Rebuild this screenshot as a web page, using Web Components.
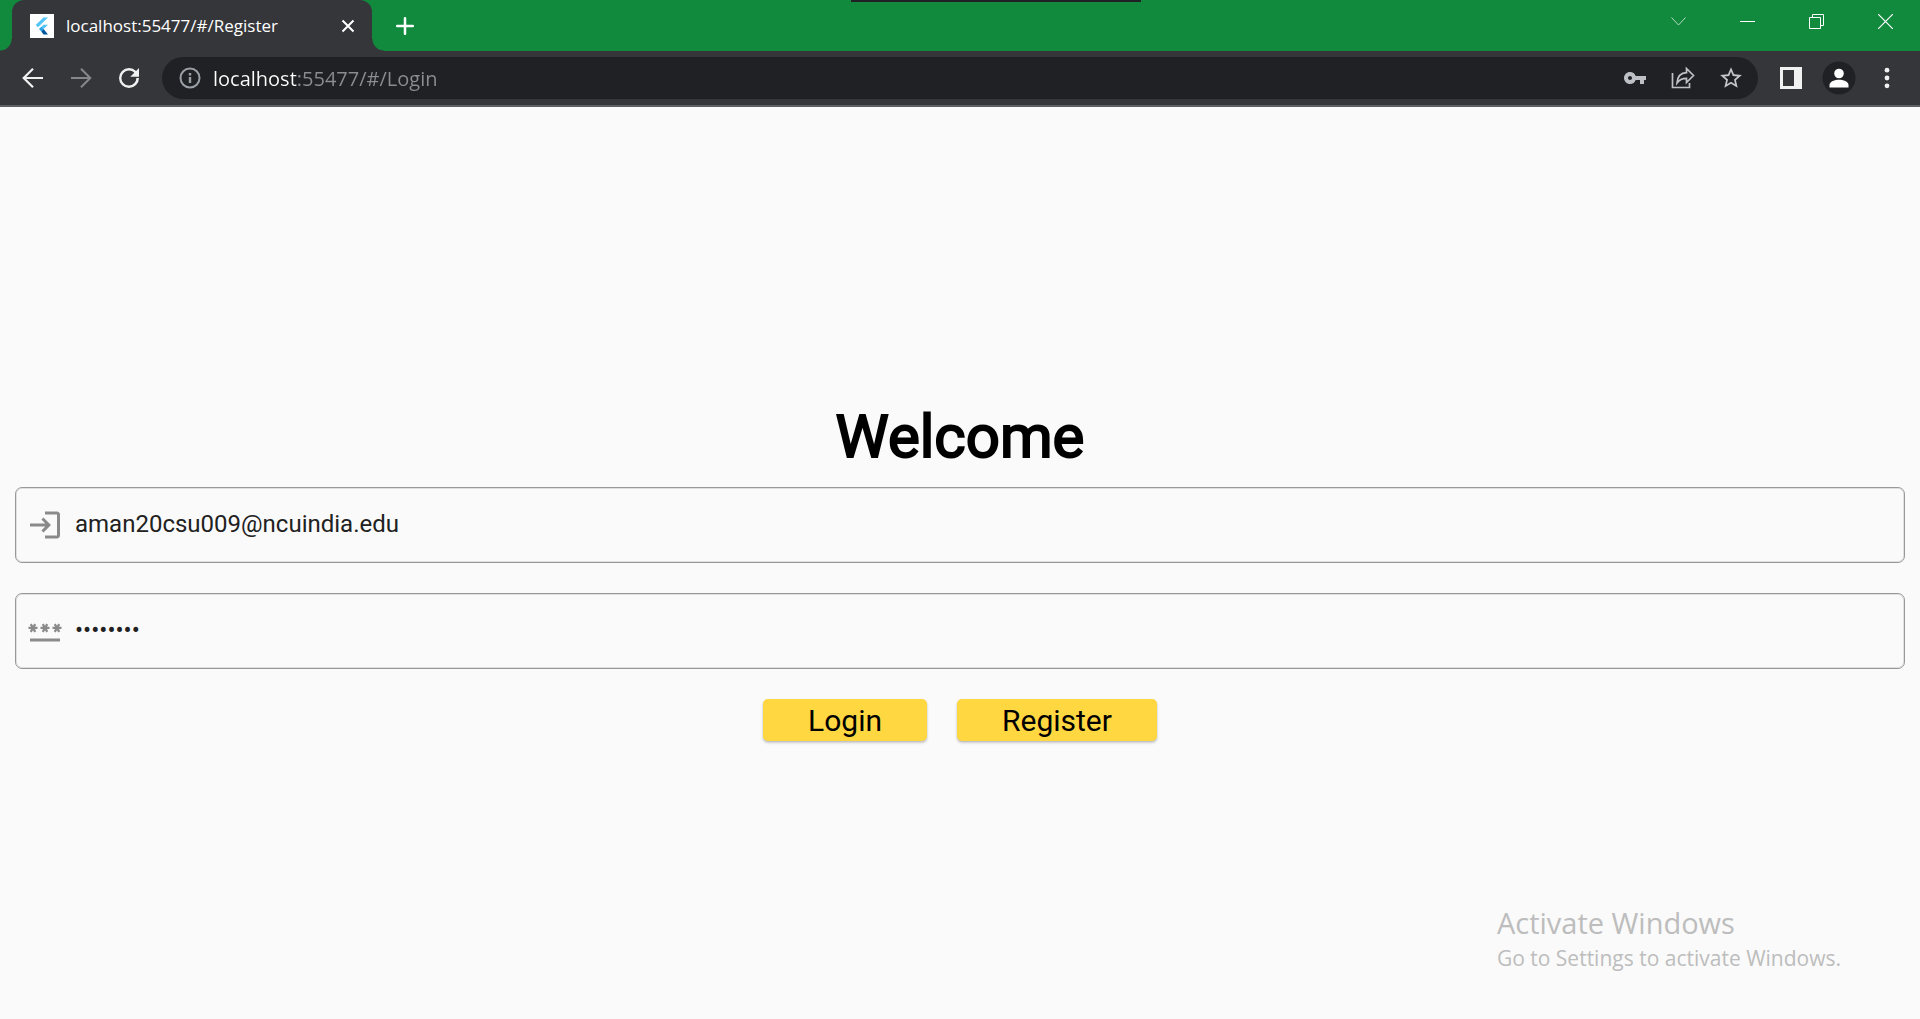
<!DOCTYPE html>
<html lang="en">
<head>
<meta charset="utf-8">
<title>localhost:55477/#/Register</title>
<style>
  html, body { margin: 0; height: 100%; }
  body { background: #fafafa; font-family: Roboto, "Liberation Sans", sans-serif; overflow: hidden; }
</style>
</head>
<body>
<app-window>
  <tab-strip slot="chrome" label="localhost:55477/#/Register"></tab-strip>
  <tool-bar slot="chrome" url="localhost:55477/#/Login"></tool-bar>
  <login-page>
    <text-field kind="text" label="Email" name="email" value="aman20csu009@ncuindia.edu"></text-field>
    <text-field kind="password" label="Password" name="password" value="12345678"></text-field>
    <raised-button slot="actions">Login</raised-button>
    <raised-button slot="actions">Register</raised-button>
  </login-page>
  <activation-note slot="overlay"></activation-note>
</app-window>

<script>
const define = (name, html, setup) => {
  const template = document.createElement('template');
  template.innerHTML = html;
  customElements.define(name, class extends HTMLElement {
    constructor() {
      super();
      this.attachShadow({ mode: 'open' }).append(template.content.cloneNode(true));
    }
    connectedCallback() { if (setup) setup(this, this.shadowRoot); }
  });
};

define('app-window', `
  <style>
    :host { display: flex; flex-direction: column; height: 100vh; position: relative; }
    main { flex: 1; display: flex; }
    .edge { position: absolute; top: 0; left: calc(50% - 109px); width: 290px; height: 2px; background: #202124; }
  </style>
  <slot name="chrome"></slot>
  <main><slot></slot></main>
  <div class="edge"></div>
  <slot name="overlay"></slot>
`);

define('tab-strip', `
  <style>
    :host { display: flex; height: 51px; background: #118a3e; padding-left: 12px;
      font-family: "Open Sans", "Noto Sans", sans-serif; }
    button { all: unset; display: flex; align-items: center; justify-content: center; }
    svg { display: block; }
    .tab { width: 360px; box-sizing: border-box; position: relative; display: flex; align-items: center;
      padding: 0 12px 0 18px; background: #35363a; border-radius: 12px 12px 0 0; color: #fff; }
    .tab::before, .tab::after { content: ""; position: absolute; bottom: 0; width: 12px; height: 12px; }
    .tab::before { right: 100%; background: radial-gradient(circle at 0 0, transparent 11px, #35363a 12px); }
    .tab::after { left: 100%; background: radial-gradient(circle at 100% 0, transparent 11px, #35363a 12px); }
    .title { flex: 1; margin-left: 12px; font-size: 17px; line-height: 24px; white-space: nowrap; }
    .close { width: 24px; height: 24px; }
    .new { width: 42px; margin-left: 12px; }
    .controls { margin-left: auto; display: flex; height: 43px; }
    .controls button { width: 69px; }
  </style>
  <div class="tab">
    <svg width="24" height="24" viewBox="0 0 24 24" aria-hidden="true">
      <path fill="#fff" d="M0 0h24v24H0z"/>
      <path fill="#54c5f8" d="M13.500 3.500H18L8 13.300 5.700 11z"/>
      <path fill="#54c5f8" d="M13.500 10.700H18l-4.400 4.400-2.300-2.200z"/>
      <path fill="#29a3e8" d="M9 15.100l2.300-2.300 2.300 2.300-2.300 2.300z"/>
      <path fill="#01579b" d="M11.300 17.400l2.300-2.300 4.400 5.400h-4.500z"/>
    </svg>
    <span class="title"></span>
    <button class="close" aria-label="Close tab">
      <svg width="14" height="14" viewBox="0 0 14 14" stroke="#fff" stroke-width="2"><path d="M1.500 1.500l11 11M12.500 1.500l-11 11"/></svg>
    </button>
  </div>
  <button class="new" aria-label="New tab">
    <svg width="18" height="18" viewBox="0 0 18 18" stroke="#fff" stroke-width="2.500" stroke-linecap="round"><path d="M9 1.200v15.600M1.200 9h15.600"/></svg>
  </button>
  <div class="controls">
    <button aria-label="Search tabs"><svg width="15" height="15" viewBox="0 0 15 15" fill="none" stroke="#b4dcc2" stroke-width="1"><path d="M.5 3.500l7 7.500 7-7.500"/></svg></button>
    <button aria-label="Minimize"><svg width="15" height="15" viewBox="0 0 15 15" stroke="#fff"><path d="M0 7.500h15"/></svg></button>
    <button aria-label="Restore"><svg width="15" height="15" viewBox="0 0 15 15" fill="none" stroke="#fff"><path d="M.5 3.500h11v11H.5zM3.500 3.500v-3h11v11h-3"/></svg></button>
    <button aria-label="Close"><svg width="15" height="15" viewBox="0 0 15 15" stroke="#fff" stroke-width="1.200"><path d="M0 0l15 15M15 0L0 15"/></svg></button>
  </div>
`, (host, root) => { root.querySelector('.title').textContent = host.getAttribute('label'); });

define('tool-bar', `
  <style>
    :host { display: flex; align-items: center; box-sizing: border-box; height: 56px; padding: 0 9px;
      background: #35363a; border-bottom: 2px solid #5d5e62;
      font-family: "Open Sans", "Noto Sans", sans-serif; }
    button { all: unset; width: 48px; height: 42px; display: flex; align-items: center; justify-content: center; }
    svg { display: block; }
    .address { flex: 1; display: flex; align-items: center; height: 42px; margin: 0 9px; padding: 0 3px;
      box-sizing: border-box; border-radius: 21px; background: #202124; }
    .address svg.info { margin: 0 12px 0 14px; }
    .address input { flex: 1; min-width: 0; height: 42px; padding: 0; border: 0; outline: 0; font: inherit; font-size: 20px;
      color: #fff; -webkit-text-fill-color: transparent;
      background: linear-gradient(to right, #fff 84px, #8b8d91 84px); -webkit-background-clip: text; background-clip: text; }
  </style>
  <button aria-label="Back"><svg width="22" height="22" viewBox="0 0 22 22" fill="none" stroke="#f1f1f2" stroke-width="2.200"><path d="M21 11H2.500M11 1.700L1.700 11l9.300 9.300"/></svg></button>
  <button aria-label="Forward"><svg width="22" height="22" viewBox="0 0 22 22" fill="none" stroke="#86878a" stroke-width="2"><path d="M1 11h18.500M11 1.700l9.300 9.300-9.300 9.300"/></svg></button>
  <button aria-label="Reload"><svg width="30" height="30" viewBox="0 0 24 24" fill="#f1f1f2"><path d="M17.650 6.350A7.958 7.958 0 0012 4a8 8 0 108 8h-2.080A6 6 0 1112 6c1.660 0 3.140.690 4.220 1.780L13 11h7V4l-2.350 2.350z"/></svg></button>
  <div class="address">
    <svg class="info" width="22" height="22" viewBox="0 0 22 22" fill="none" stroke="#9aa0a6" stroke-width="2"><circle cx="11" cy="11" r="9.500"/><path stroke-width="2.400" d="M11 10v6M11 6v2.400"/></svg>
    <input aria-label="Address" type="text" spellcheck="false">
    <button aria-label="Passwords"><svg width="24" height="24" viewBox="0 0 24 24" fill="#bdc1c6"><path fill-rule="evenodd" d="M12.650 10A5.990 5.990 0 007 6c-3.310 0-6 2.690-6 6s2.690 6 6 6a5.990 5.990 0 005.650-4H17v4h4v-4h2v-4H12.650zM7 14c-1.100 0-2-.9-2-2s.9-2 2-2 2 .9 2 2-.9 2-2 2z"/></svg></button>
    <button aria-label="Share"><svg width="24" height="24" viewBox="0 0 24 24" fill="none" stroke="#bdc1c6" stroke-width="1.700"><path d="M1.500 7v14.500h17V17M6 17c.4-6 3.500-10 9.500-10.300V2.500l7 7-7 7v-4.200C11.300 12.300 8 14 6 17z"/></svg></button>
    <button aria-label="Bookmark"><svg width="26" height="26" viewBox="0 0 24 24" fill="#c4c6c9"><path d="M22 9.240l-7.190-.62L12 2 9.190 8.630 2 9.240l5.460 4.730L5.820 21 12 17.270 18.180 21l-1.630-7.030L22 9.240zM12 15.400l-3.760 2.270 1-4.280-3.320-2.880 4.380-.38L12 6.100l1.710 4.040 4.380.38-3.320 2.880 1 4.280L12 15.400z"/></svg></button>
  </div>
  <button aria-label="Side panel"><svg width="22" height="22" viewBox="0 0 22 22"><path fill="#f1f1f2" fill-rule="evenodd" d="M0 0h22v22H0zM3 3v16h11V3z"/></svg></button>
  <button aria-label="Profile"><svg width="34" height="34" viewBox="0 0 34 34"><circle cx="17" cy="17" r="16.500" fill="#202124"/><circle cx="17" cy="12.500" r="4.800" fill="#fff"/><path fill="#fff" d="M7.500 26.500V24c0-3.400 5.500-5.200 9.500-5.200s9.500 1.800 9.500 5.200v2.500z"/></svg></button>
  <button aria-label="Menu"><svg width="6" height="22" viewBox="0 0 6 22" fill="#f1f1f2"><circle cx="3" cy="3.200" r="2.400"/><circle cx="3" cy="11" r="2.400"/><circle cx="3" cy="18.800" r="2.400"/></svg></button>
`, (host, root) => { root.querySelector('input').value = host.getAttribute('url'); });

define('login-page', `
  <style>
    :host { flex: 1; display: flex; flex-direction: column; justify-content: center; padding: 0 15px; }
    h1 { margin: 0; padding: 15px 0 14px; font-size: 60px; line-height: 73px; font-weight: 400; text-align: center;
      color: #000; -webkit-text-stroke: 2px #000; }
    form { display: flex; flex-direction: column; gap: 30px; }
    .actions { display: flex; justify-content: center; gap: 30px; }
  </style>
  <h1>Welcome</h1>
  <form>
    <slot></slot>
    <div class="actions"><slot name="actions"></slot></div>
  </form>
`);

define('text-field', `
  <style>
    :host { display: block; }
    .box { display: flex; align-items: center; box-sizing: border-box; height: 76px; padding: 0 12px 0 11px;
      border: 1px solid #989898; border-radius: 7px; box-shadow: inset 0 0 0 1px #e0e0e0; }
    label { display: flex; margin-right: 12px; }
    svg { display: block; fill: #8a8a8a; }
    input { flex: 1; min-width: 0; height: 60px; padding: 0 0 2px; border: 0; outline: 0; background: none;
      font: inherit; font-size: 24px; color: #212121; }
  </style>
  <div class="box">
    <label for="field"><svg width="36" height="36" viewBox="0 0 24 24"><path/></svg></label>
    <input id="field" spellcheck="false" autocomplete="off">
  </div>
`, (host, root) => {
  const icons = {
    text: 'M11 7L9.600 8.400l2.600 2.600H2v2h10.200l-2.600 2.600L11 17l5-5-5-5zm9 12h-8v2h8c1.100 0 2-.9 2-2V5c0-1.100-.9-2-2-2h-8v2h8v14z',
    password: 'M2 17h20v2H2v-2zm1.150-4.050L4 11.470l.85 1.480 1.300-.75-.85-1.480H7v-1.500H5.300l.85-1.470L4.850 7 4 8.470 3.150 7l-1.300.75.85 1.470H1v1.500h1.700l-.85 1.480 1.300.75zm6.700-.75l1.300.75.85-1.480.85 1.480 1.300-.75-.85-1.480H15v-1.500h-1.700l.85-1.470-1.300-.75L12 8.470 11.150 7l-1.300.75.85 1.470H9v1.500h1.700l-.85 1.480zM23 9.220h-1.700l.85-1.470-1.300-.75L20 8.470 19.150 7l-1.300.75.85 1.470H17v1.500h1.700l-.85 1.480 1.300.75.85-1.480.85 1.480 1.300-.75-.85-1.480H23v-1.500z'
  };
  const kind = host.getAttribute('kind');
  const input = root.querySelector('input');
  input.type = kind;
  input.name = host.getAttribute('name');
  input.value = host.getAttribute('value');
  root.querySelector('path').setAttribute('d', icons[kind]);
  root.querySelector('label').setAttribute('aria-label', host.getAttribute('label'));
});

define('raised-button', `
  <style>
    :host { display: block; }
    button { display: block; height: 42px; padding: 2px 45px 0; border: 0; border-radius: 5px; background: #ffd740; color: #000;
      font: inherit; font-size: 30px; line-height: 40px;
      box-shadow: 0 2px 3px rgba(0,0,0,.16), 0 1px 2px rgba(0,0,0,.12); }
  </style>
  <button type="button"><slot></slot></button>
`);

define('activation-note', `
  <style>
    :host { position: absolute; right: 79px; bottom: 46px; color: #bdbdbd; pointer-events: none;
      font-family: "Open Sans", "Noto Sans", sans-serif; white-space: nowrap; }
    p { margin: 0; }
    .head { font-size: 29px; line-height: 40px; }
    .body { font-size: 21px; line-height: 30px; }
  </style>
  <p class="head">Activate Windows</p>
  <p class="body">Go to Settings to activate Windows.</p>
`);
</script>
</body>
</html>
